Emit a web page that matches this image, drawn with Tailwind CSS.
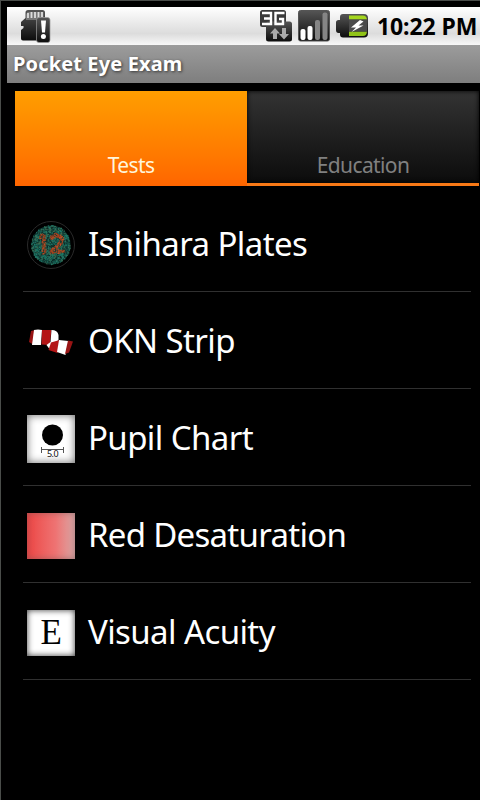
<!DOCTYPE html>
<html lang="en">
<head>
    <meta charset="UTF-8">
    <meta name="viewport" content="width=device-width, initial-scale=1.0">
    <title>Pocket Eye Exam</title>
    <script src="https://cdn.jsdelivr.net/npm/@tailwindcss/browser@4"></script>
</head>
<body class="bg-black">
<div class="w-[480px] h-[800px] overflow-hidden bg-black border-t border-l border-[#4a4d4a] pt-[6px] pl-[6px] font-['Noto_Sans',sans-serif]">

    <!-- Status bar -->
    <header class="flex h-[38px] items-center bg-linear-to-b from-white via-[#dcdcdc] via-70% to-[#f8f8f8]">
        <svg class="ml-[13px] shrink-0" width="32" height="36" viewBox="20 8 32 36">
            <defs>
                <linearGradient id="dark" x1="0" y1="0" x2="0" y2="1">
                    <stop offset="0" stop-color="#555"/>
                    <stop offset="1" stop-color="#0c0c0c"/>
                </linearGradient>
            </defs>
            <path d="M28 10h14.500q2.500 0 2.500 2.500V40.500H23q-2 0-2-2V30l2.500-2v-2H21v-4l4.500-4v-5.500q0-2.500 2.500-2.500z" fill="url(#dark)"/>
            <path d="M27.500 12h16v5.500h-4V20H26v-5.500z" fill="#777"/>
            <path d="M28 13v5M31.500 12v6M35 12v6M38.500 12v6M42 12v5" stroke="#ddd" stroke-width="1.800"/>
            <rect x="36.500" y="17.500" width="13.500" height="25" rx="2.500" fill="url(#dark)" stroke="#999" stroke-width=".7"/>
            <path d="M41 20.500h5l-1 12h-3z" fill="#fff"/>
            <circle cx="43.400" cy="36.500" r="2.500" fill="#fff"/>
        </svg>
        <svg class="ml-[207px] shrink-0" width="111" height="36" viewBox="259 8 111 36">
            <rect x="260" y="10" width="26" height="17" rx="2.500" fill="#3a3a3a"/>
            <rect x="266" y="21.500" width="26" height="20" rx="2.500" fill="url(#dark)"/>
            <path d="M262 13h9v11h-9M264 18.500h7M284.500 13h-9v11h7.500v-5h-4" fill="none" stroke="#fff" stroke-width="2.400"/>
            <path d="M275 28l5 5.500h-3V39h-4v-5.500h-3zM284 39.500l-5-5.500h3v-6h4v6h3z" fill="#aaa"/>
            <rect x="298.500" y="10.500" width="31" height="30.500" rx="2" fill="url(#dark)" stroke="#555"/>
            <rect x="300.500" y="29" width="5" height="11" rx="2" fill="#fff"/>
            <rect x="307.500" y="26" width="5" height="14" rx="2" fill="#fff"/>
            <rect x="315" y="20" width="5" height="20" rx="2" fill="#858585"/>
            <rect x="322.500" y="12.500" width="5" height="27.500" rx="2" fill="#858585"/>
            <path d="M343 14h21q4 0 4 4v15.500q0 4-4 4h-21q-3 0-3-3V33h-1.500q-2.500 0-2.500-3v-7.500q0-2.500 2.500-2.500h1.500v-3q0-3 3-3z" fill="url(#dark)"/>
            <path d="M349 15.500h14q3.500 0 4 4h-18z" fill="#a4d61e"/>
            <path d="M349 31.500h18q-.5 4.500-4 4.500h-14z" fill="#90c317"/>
            <path d="M349 19.500h18v12h-18z" fill="#4a4a4a"/>
            <path d="M360 20l-9 7.500h5l-4.500 4.500 12-6.500h-5l5-4z" fill="#fff"/>
        </svg>
        <span id="clock" class="ml-[7px] pt-px whitespace-nowrap text-[23px] font-bold tracking-[-0.1px] text-black">10:22 PM</span>
    </header>

    <div class="flex h-[38px] items-center bg-linear-to-b from-[#9c9c9c] to-[#7e7e7e] pl-[6px]">
        <h1 class="whitespace-nowrap text-[20px] font-bold tracking-[0.13px] text-white text-shadow-[1px_1px_3px_#333]">Pocket Eye Exam</h1>
    </div>

    <nav class="mt-2 ml-2 flex h-[95px] w-[464px] tracking-[-0.6px]">
        <a class="flex w-[232px] items-end justify-center bg-linear-to-b from-[#ff9e00] to-[#ff6500] pb-[5px] text-[21px] text-[#fff6dc]">Tests</a>
        <a class="flex w-[232px] items-end justify-center border-b-[3px] border-[#f87916] bg-linear-to-b from-[#343434] to-[#0c0c0c] pb-[2px] text-[21px] text-[#808080] inset-shadow-[0_0_5px_#000]">Education</a>
    </nav>

    <ul class="mt-[9px] ml-4 w-[448px] text-[33px] tracking-[-0.6px] text-white">
        <li class="flex h-[97px] items-center gap-[13px] border-b border-[#303030] pt-1 pl-1">
            <svg class="shrink-0" width="48" height="48" viewBox="0 0 48 48">
                <circle cx="24" cy="24" r="23.500" fill="#000" stroke="#292929"/>
                <circle cx="24" cy="24" r="19.500" fill="#103a35"/>
                <g id="plate"></g>
            </svg>
            <span class="-mt-[3px]">Ishihara Plates</span>
        </li>
        <li class="flex h-[97px] items-center gap-[13px] border-b border-[#303030] pt-1 pl-1">
            <svg class="shrink-0" width="48" height="48" viewBox="0 0 48 48">
                <path d="M4 13l4-1-1 15-5-3z" fill="#981414"/>
                <path d="M7 12q4-1 8 0l-1 15H5z" fill="#fff"/>
                <path d="M15 12h9.500l-2 15-8-.5z" fill="#b41516"/>
                <path d="M24.500 12q6 0 7 5v5l-9 9-3-4 4-3z" fill="#fff"/>
                <path d="M24 24.500l8.500-2.500-2 13-9-3z" fill="#b41516"/>
                <path d="M32 22l9.500 1-3 14-8.500-3z" fill="#fff"/>
                <path d="M41 22.500l5 1-4 11-4 1.500z" fill="#981414"/>
            </svg>
            <span class="-mt-[3px]">OKN Strip</span>
        </li>
        <li class="flex h-[97px] items-center gap-[13px] border-b border-[#303030] pt-1 pl-1">
            <svg class="shrink-0 bg-white inset-shadow-[0_0_8px_#666]" width="48" height="48" viewBox="0 0 48 48">
                <circle cx="25.500" cy="20" r="10.500" fill="#000"/>
                <path d="M14.500 32v6M36.500 32v6M14.500 34.500h22" stroke="#555" fill="none"/>
                <text x="25.500" y="42" text-anchor="middle" font-size="9" letter-spacing="-.5" fill="#111">5.0</text>
            </svg>
            <span class="-mt-[3px]">Pupil Chart</span>
        </li>
        <li class="flex h-[97px] items-center gap-[13px] border-b border-[#303030] pt-1 pl-1">
            <div class="h-[46px] w-[48px] shrink-0 bg-linear-to-r from-[#ec4343] via-[#ee7373] via-60% to-[#d8a5a5] inset-shadow-[0_0_6px_#77555599]"></div>
            <span class="-mt-[3px] tracking-[-0.72px]">Red Desaturation</span>
        </li>
        <li class="flex h-[97px] items-center gap-[13px] border-b border-[#303030] pt-1 pl-1">
            <div class="-mt-px flex h-[46px] w-[48px] shrink-0 items-center justify-center bg-white inset-shadow-[0_0_6px_#333] font-['Liberation_Serif',serif] text-[35px] leading-none text-black">E</div>
            <span class="-mt-[3px]">Visual Acuity</span>
        </li>
    </ul>
</div>

<script>
// Fill the Ishihara plate with dots, orange where they fall on the "12"
const plate = document.getElementById('plate');
const strokes = [[14,16,17,14],[17,14,17,32],[24,17,29,14],[29,14,35,17],[35,17,34,22],[34,22,24,31],[24,31,36,30]];
let seed = 12;

function random() {
    seed = (seed * 16807) % 2147483647;
    return seed / 2147483647;
}

function onNumber(x, y) {
    return strokes.some(([x1, y1, x2, y2]) => {
        const dx = x2 - x1, dy = y2 - y1;
        const t = Math.max(0, Math.min(1, ((x - x1) * dx + (y - y1) * dy) / (dx * dx + dy * dy)));
        return Math.hypot(x - x1 - t * dx, y - y1 - t * dy) < 2;
    });
}

const greens = ['#1c7a68', '#17594e', '#237565', '#0c2824', '#3d6b50'];
const oranges = ['#b84a20', '#8e3a20', '#c05028', '#6a4a2a', '#a8441f'];
let dots = '';
for (let i = 0; i < 1100; i++) {
    const angle = random() * Math.PI * 2;
    const r = Math.sqrt(random()) * 19.5;
    const x = 24 + Math.cos(angle) * r;
    const y = 24 + Math.sin(angle) * r;
    const colors = onNumber(x, y) ? oranges : greens;
    const color = colors[Math.floor(random() * colors.length)];
    dots += `<circle cx="${x.toFixed(1)}" cy="${y.toFixed(1)}" r="${(0.5 + random() * 0.4).toFixed(1)}" fill="${color}"/>`;
}
plate.innerHTML = dots;
</script>
</body>
</html>
